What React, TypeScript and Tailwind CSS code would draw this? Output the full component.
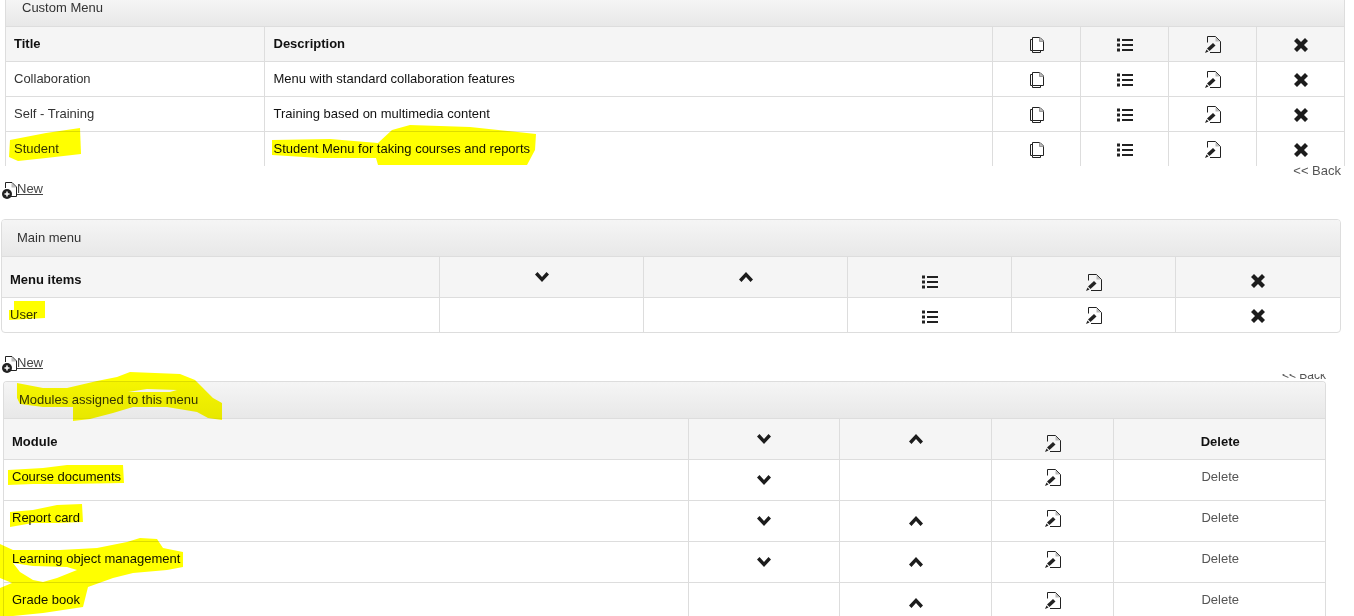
import React from 'react';

const CopyIcon = () => (
    <svg width="16" height="17" viewBox="0 0 16 17" className="block mx-auto" fill="none" stroke="#222" strokeWidth="1">
        <path d="M4.5 3.5H1.5V14.5H3.5V16.5H11.5V14.5" />
        <path d="M3.5 14.5V1.5H11L14.5 5V14.5H3.5Z" fill="#fff" />
        <path d="M10.5 1.5V5.5H14.5" fill="#bbb" stroke="#999" />
    </svg>
);

const ListIcon = () => (
    <svg width="16" height="14" viewBox="0 0 16 14" className="block mx-auto" fill="#222">
        <rect x="0" y="0.5" width="3" height="3" />
        <rect x="0" y="5.5" width="3" height="3" />
        <rect x="0" y="10.5" width="3" height="3" />
        <rect x="5" y="1" width="11" height="2" />
        <rect x="5" y="6" width="11" height="2" />
        <rect x="5" y="11" width="11" height="2" />
    </svg>
);

const EditIcon = () => (
    <svg width="16" height="17" viewBox="0 0 16 17" className="block mx-auto" fill="none">
        <path d="M2.5 6.5V0.5H10.5L15.5 5.5V16.5H5" stroke="#222" />
        <path d="M10.5 1V5.5H15L10.5 1Z" fill="#bbb" />
        <path d="M8 7L10.5 9.5L4.5 15L2 12.5Z" fill="#222" />
        <path d="M1.5 13.5L3.5 15.5L0 17Z" fill="#222" />
    </svg>
);

const CloseIcon = () => (
    <svg width="14" height="14" viewBox="0 0 14 14" className="block mx-auto" fill="#1c1c1c">
        <path d="M3 0L7 4L11 0L14 3L10 7L14 11L11 14L7 10L3 14L0 11L4 7L0 3Z" />
    </svg>
);

const DownIcon = () => (
    <svg width="14" height="10" viewBox="0 0 14 10" className="block mx-auto" fill="#1c1c1c">
        <path d="M0 2.5L2.5 0L7 5L11.5 0L14 2.5L7 10Z" />
    </svg>
);

const UpIcon = () => (
    <svg width="14" height="10" viewBox="0 0 14 10" className="block mx-auto" fill="#1c1c1c">
        <path d="M0 7.5L2.5 10L7 5L11.5 10L14 7.5L7 0Z" />
    </svg>
);

const NewLink = ({ className }: { className: string }) => (
    <a className={`flex items-start h-[17px] underline text-[#444] ${className}`}>
        <svg width="15" height="17" viewBox="0 0 15 17" className="shrink-0" fill="none">
            <path d="M3.5 6V0.5H10L14.5 5V14.5H7" stroke="#222" />
            <path d="M9.5 1V5.5H14L9.5 1Z" fill="#bbb" />
            <circle cx="5" cy="12" r="5" fill="#222" />
            <path d="M5 9.5V14.5M2.5 12H7.5" stroke="#fff" strokeWidth="1.5" />
        </svg>
        <span className="leading-[14px]">New</span>
    </a>
);

const Td = ({ children, className = '' }: { children?: React.ReactNode; className?: string }) => (
    <td className={`border border-[#ddd] align-top p-0 ${className}`}>{children}</td>
);

const Heading = ({ title, className }: { title: string; className: string }) => (
    <div className={`bg-gradient-to-b from-[#f5f5f5] to-[#e8e8e8] border-b border-[#ddd] text-[#333] ${className}`}>{title}</div>
);

const customRows = [
    ['Collaboration', 'Menu with standard collaboration features'],
    ['Self - Training', 'Training based on multimedia content'],
    ['Student', 'Student Menu for taking courses and reports'],
];

const modules = [
    { name: 'Course documents', down: true, up: false },
    { name: 'Report card', down: true, up: true },
    { name: 'Learning object management', down: true, up: true },
    { name: 'Grade book', down: false, up: true },
];

const App: React.FC = () => {
    return (
        <div className="relative w-[1354px] h-[616px] overflow-hidden bg-white text-[13px] text-[#333] font-['Liberation_Sans',Arial,sans-serif]">
            {/* first panel is cut off at the top of the shot */}
            <div className="ml-[5px] w-[1340px] h-[166px] overflow-hidden border-l border-r border-[#ddd]">
                <Heading title="Custom Menu" className="h-[27px] pl-[16px] leading-[15px]" />
                <table className="table-fixed w-full border-collapse -mt-px">
                    <colgroup>
                        <col className="w-[258px]" />
                        <col className="w-[728px]" />
                        <col className="w-[88px]" />
                        <col className="w-[88px]" />
                        <col className="w-[88px]" />
                        <col />
                    </colgroup>
                    <tbody>
                        <tr className="h-[35px] bg-[#f5f5f5] font-bold text-[#111]">
                            <Td className="border-l-0 pl-[8px] pt-[7px]">Title</Td>
                            <Td className="pl-[9px] pt-[7px]">Description</Td>
                            <Td className="pl-[2px] pt-[9px]"><CopyIcon /></Td>
                            <Td className="pl-[2px] pt-[11px]"><ListIcon /></Td>
                            <Td className="pl-[2px] pt-[9px]"><EditIcon /></Td>
                            <Td className="border-r-0 pl-[2px] pt-[11px]"><CloseIcon /></Td>
                        </tr>
                        {customRows.map(row => (
                            <tr key={row[0]} className="h-[35px]">
                                <Td className="border-l-0 pl-[8px] pt-[7px]">{row[0]}</Td>
                                <Td className="pl-[9px] pt-[7px] text-[#111]">{row[1]}</Td>
                                <Td className="pl-[2px] pt-[9px]"><CopyIcon /></Td>
                                <Td className="pl-[2px] pt-[11px]"><ListIcon /></Td>
                                <Td className="pl-[2px] pt-[9px]"><EditIcon /></Td>
                                <Td className="border-r-0 pl-[2px] pt-[11px]"><CloseIcon /></Td>
                            </tr>
                        ))}
                    </tbody>
                </table>
            </div>

            <div className="h-[12px] -mt-[1px] pr-[13px] text-right text-[#555] leading-[11px] overflow-hidden">&lt;&lt; Back</div>
            <NewLink className="ml-[2px] mt-[5px]" />

            <div className="ml-[1px] mt-[20px] w-[1340px] h-[114px] border border-[#ddd] rounded-[4px] overflow-hidden">
                <Heading title="Main menu" className="h-[37px] pl-[15px] pt-[10px] leading-[15px]" />
                <table className="table-fixed w-full border-collapse -mt-px">
                    <colgroup>
                        <col className="w-[437px]" />
                        <col className="w-[204px]" />
                        <col className="w-[204px]" />
                        <col className="w-[164px]" />
                        <col className="w-[164px]" />
                        <col />
                    </colgroup>
                    <tbody>
                        <tr className="h-[41px] bg-[#f5f5f5]">
                            <Td className="border-l-0 pl-[8px] pt-[13px] font-bold text-[#111]">Menu items</Td>
                            <Td className="pl-[2px] pt-[15px]"><DownIcon /></Td>
                            <Td className="pl-[2px] pt-[15px]"><UpIcon /></Td>
                            <Td className="pl-[2px] pt-[18px]"><ListIcon /></Td>
                            <Td className="pl-[2px] pt-[17px]"><EditIcon /></Td>
                            <Td className="border-r-0 pt-[17px]"><CloseIcon /></Td>
                        </tr>
                        <tr className="h-[35px]">
                            <Td className="border-l-0 border-b-0 pl-[8px] pt-[7px]">User</Td>
                            <Td className="border-b-0" />
                            <Td className="border-b-0" />
                            <Td className="border-b-0 pl-[2px] pt-[12px]"><ListIcon /></Td>
                            <Td className="border-b-0 pl-[2px] pt-[9px]"><EditIcon /></Td>
                            <Td className="border-b-0 border-r-0 pt-[11px]"><CloseIcon /></Td>
                        </tr>
                    </tbody>
                </table>
            </div>

            <NewLink className="ml-[2px] mt-[23px]" />

            <div className="h-[6px] mt-[1px] w-[1326px] text-right text-[12px] text-[#555] leading-[2px] overflow-hidden">&lt;&lt; Back</div>

            <div className="ml-[3px] mt-[1px] w-[1323px] h-[260px] border border-b-0 border-[#ddd] rounded-t-[4px] overflow-hidden">
                <Heading title="Modules assigned to this menu" className="h-[37px] pl-[15px] pt-[10px] leading-[15px]" />
                <table className="table-fixed w-full border-collapse -mt-px">
                    <colgroup>
                        <col className="w-[684px]" />
                        <col className="w-[151px]" />
                        <col className="w-[152px]" />
                        <col className="w-[122px]" />
                        <col />
                    </colgroup>
                    <tbody>
                        <tr className="h-[41px] bg-[#f5f5f5]">
                            <Td className="border-l-0 pl-[8px] pt-[13px] font-bold text-[#111]">Module</Td>
                            <Td className="pt-[15px]"><DownIcon /></Td>
                            <Td className="pl-[2px] pt-[15px]"><UpIcon /></Td>
                            <Td className="pl-[2px] pt-[16px]"><EditIcon /></Td>
                            <Td className="border-r-0 pl-[2px] pt-[13px] text-center font-bold text-[#111]">Delete</Td>
                        </tr>
                        {modules.map(m => (
                            <tr key={m.name} className="h-[41px]">
                                <Td className="border-l-0 pl-[8px] pt-[7px] text-[#111]">{m.name}</Td>
                                <Td className="pt-[15px]">{m.down && <DownIcon />}</Td>
                                <Td className="pl-[2px] pt-[15px]">{m.up && <UpIcon />}</Td>
                                <Td className="pl-[2px] pt-[9px]"><EditIcon /></Td>
                                <Td className="border-r-0 pl-[2px] pt-[7px] text-center text-[#555]">Delete</Td>
                            </tr>
                        ))}
                    </tbody>
                </table>
            </div>

            {/* marker scribbles on top of the shot */}
            <svg width="1354" height="616" viewBox="0 0 1354 616" className="absolute left-0 top-0 pointer-events-none mix-blend-multiply" fill="#ffff00" strokeLinejoin="round">
                <path d="M10 140L46 133L80 128L81 154L46 158L18 161L9 157Z" />
                <path d="M272 140L330 139L378 143L392 130L410 125L470 127L536 134L535 150L527 165L378 165L376 158L320 158L272 155Z" />
                <path d="M14 301L45 301L45 318L9 320L9 310L14 310Z" />
                <path fillRule="evenodd" d="M17 383L43 388L67 388L97 381L117 377L130 372L180 374L195 380L203 388L213 398L222 403L222 420L208 418L197 412L167 407L133 407L113 413L90 419L73 421L73 407L43 407L20 404L17 398ZM128 392L147 389L177 390L170 392L133 392Z" />
                <path d="M8 470L43 468L67 465L123 465L124 483L67 484L33 484L8 485Z" />
                <path d="M10 512L33 510L57 505L82 504L83 522L57 523L33 523L10 527Z" />
                <path fillRule="evenodd" d="M0 544L13 550L60 550L97 548L127 542L140 538L157 539L163 548L183 552L183 567L167 570L133 573L113 578L88 587L83 607L43 613L13 616L0 616L0 588L12 583L0 578ZM13 563L33 566L67 567L77 570L57 578L43 582L33 580L20 572Z" />
            </svg>
        </div>
    );
};

export default App;
